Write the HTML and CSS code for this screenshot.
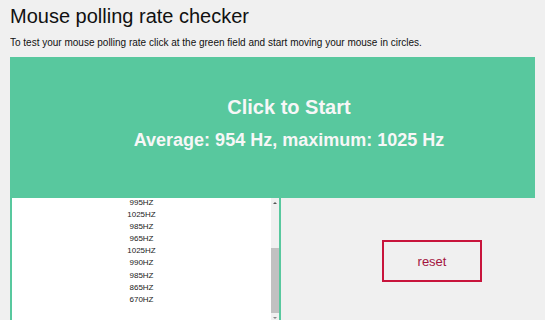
FILE: index.html
```html
<!DOCTYPE html>
<html lang="en">
<head>
    <meta charset="UTF-8">
    <title>Mouse polling rate checker</title>
    <link rel="stylesheet" href="styles.css">
</head>
<body>
    <h1 class="title">Mouse polling rate checker</h1>
    <p class="hint">To test your mouse polling rate click at the green field and start moving your mouse in circles.</p>

    <div class="checker">
        <div class="field">
            <div class="field-title">Click to Start</div>
            <div class="field-stats">Average: 954 Hz, maximum: 1025 Hz</div>
        </div>

        <div class="bottom">
            <div class="log">
                <ul class="log-list">
                    <li>995HZ</li>
                    <li>1025HZ</li>
                    <li>985HZ</li>
                    <li>965HZ</li>
                    <li>1025HZ</li>
                    <li>990HZ</li>
                    <li>985HZ</li>
                    <li>865HZ</li>
                    <li>670HZ</li>
                </ul>
                <div class="scrollbar">
                    <span class="arrow arrow-up"></span>
                    <div class="track"><div class="thumb"></div></div>
                    <span class="arrow arrow-down"></span>
                </div>
            </div>
            <div class="controls">
                <button class="reset">reset</button>
            </div>
        </div>
    </div>
</body>
</html>
```

FILE: styles.css
```css
html, body {
    overflow: hidden;
}

body {
    font-family: "Liberation Sans", Arial, sans-serif;
    background-color: #f0f0f0;
    color: #111;
    margin: 0 10px;
}

.title {
    font-size: 20px;
    font-weight: normal;
    line-height: 23px;
    margin: 5px 0 0 0;
}

.hint {
    font-size: 10px;
    line-height: 12px;
    margin: 9px 0 0 0;
}

.checker {
    width: 558px;
    margin-top: 8px;
}

.field {
    background-color: #58c89e;
    color: #f7f7f7;
    height: 141px;
    box-sizing: border-box;
    padding-top: 39px;
    text-align: center;
    font-weight: bold;
    cursor: pointer;
}

.field-title {
    font-size: 20px;
    line-height: 23px;
}

.field-stats {
    font-size: 18px;
    line-height: 21px;
    margin-top: 11px;
}

.bottom {
    display: flex;
}

.log {
    display: flex;
    width: 271px;
    height: 124px;
    box-sizing: border-box;
    border-left: 2px solid #58c89e;
    border-right: 2px solid #58c89e;
    background-color: #fff;
}

.log-list {
    flex: 1;
    list-style: none;
    margin: -1px 0 0 0;
    padding: 0;
    text-align: center;
    font-size: 8px;
    line-height: 12.1px;
    color: #222;
}

.scrollbar {
    width: 8px;
    display: flex;
    flex-direction: column;
    background-color: #f0f0f0;
}

.track {
    flex: 1;
}

.thumb {
    margin-top: 41px;
    height: 65px;
    background-color: #c1c1c1;
}

.arrow {
    height: 10px;
    display: flex;
    align-items: center;
    justify-content: center;
}

.arrow::before {
    content: "";
    border-left: 2px solid transparent;
    border-right: 2px solid transparent;
}

.arrow-up::before {
    border-bottom: 2px solid #555;
}

.arrow-down::before {
    border-top: 2px solid #888;
}

.controls {
    flex: 1;
    display: flex;
    align-items: center;
    padding-left: 101px;
}

.reset {
    width: 100px;
    height: 42px;
    margin-top: 2px;
    background: transparent;
    border: 2px solid #c8143c;
    color: #a3143e;
    font-family: "Liberation Sans", Arial, sans-serif;
    font-size: 13px;
    cursor: pointer;
}
```
